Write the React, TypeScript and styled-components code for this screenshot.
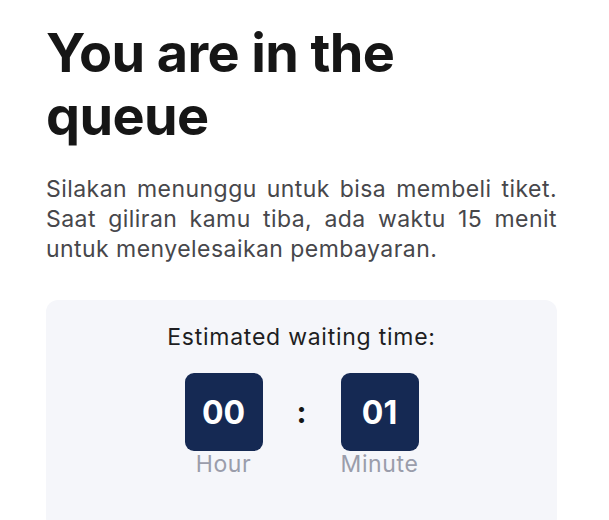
import React from "react";
import styled, { createGlobalStyle } from "styled-components";

const Global = createGlobalStyle`
  html, body { margin: 0; padding: 0; background: #ffffff; }
  body { font-family: Inter, "Noto Sans", sans-serif; -webkit-font-smoothing: antialiased; }
  * { box-sizing: border-box; }
`;

const Page = styled.main`
  width: 609px;
  padding: 21px 52px 0 46px;
  display: flex;
  flex-direction: column;
`;

const Title = styled.h1`
  margin: 0;
  font-size: 54px;
  line-height: 63px;
  font-weight: 700;
  color: #161616;
  letter-spacing: -0.6px;
`;

const Lead = styled.p`
  margin: 27px 0 0;
  font-size: 23px;
  line-height: 30px;
  color: #47474b;
  text-align: justify;
  letter-spacing: 0.45px;
`;

const Card = styled.section`
  margin-top: 36px;
  background: #f5f6fa;
  border-radius: 12px;
  padding: 23px 0 44px;
  display: flex;
  flex-direction: column;
  align-items: center;
  min-height: 230px;
`;

const CardLabel = styled.div`
  font-size: 23px;
  line-height: 28px;
  color: #1e1e22;
  letter-spacing: 0.75px;
`;

const Timer = styled.div`
  margin-top: 22px;
  display: flex;
  align-items: flex-start;
`;

const Unit = styled.div`
  display: flex;
  flex-direction: column;
  align-items: center;
  width: 78px;
`;

const Box = styled.div`
  width: 78px;
  height: 78px;
  border-radius: 9px;
  background: #152953;
  color: #ffffff;
  display: flex;
  align-items: center;
  justify-content: center;
  font-size: 32px;
  font-weight: 700;
`;

const UnitLabel = styled.div`
  font-size: 23px;
  line-height: 26px;
  color: #9a9dab;
  white-space: nowrap;
  letter-spacing: 0.6px;
`;

const Colon = styled.div`
  width: 78px;
  height: 78px;
  display: flex;
  align-items: center;
  justify-content: center;
  font-size: 30px;
  font-weight: 700;
  color: #161616;
`;

export default function App() {
  return (
    <>
      <Global />
      <Page>
        <Title>You are in the queue</Title>
        <Lead>
          Silakan menunggu untuk bisa membeli tiket. Saat giliran kamu tiba, ada waktu 15 menit
          untuk menyelesaikan pembayaran.
        </Lead>
        <Card>
          <CardLabel>Estimated waiting time:</CardLabel>
          <Timer>
            <Unit>
              <Box>00</Box>
              <UnitLabel>Hour</UnitLabel>
            </Unit>
            <Colon>:</Colon>
            <Unit>
              <Box>01</Box>
              <UnitLabel>Minute</UnitLabel>
            </Unit>
          </Timer>
        </Card>
      </Page>
    </>
  );
}
